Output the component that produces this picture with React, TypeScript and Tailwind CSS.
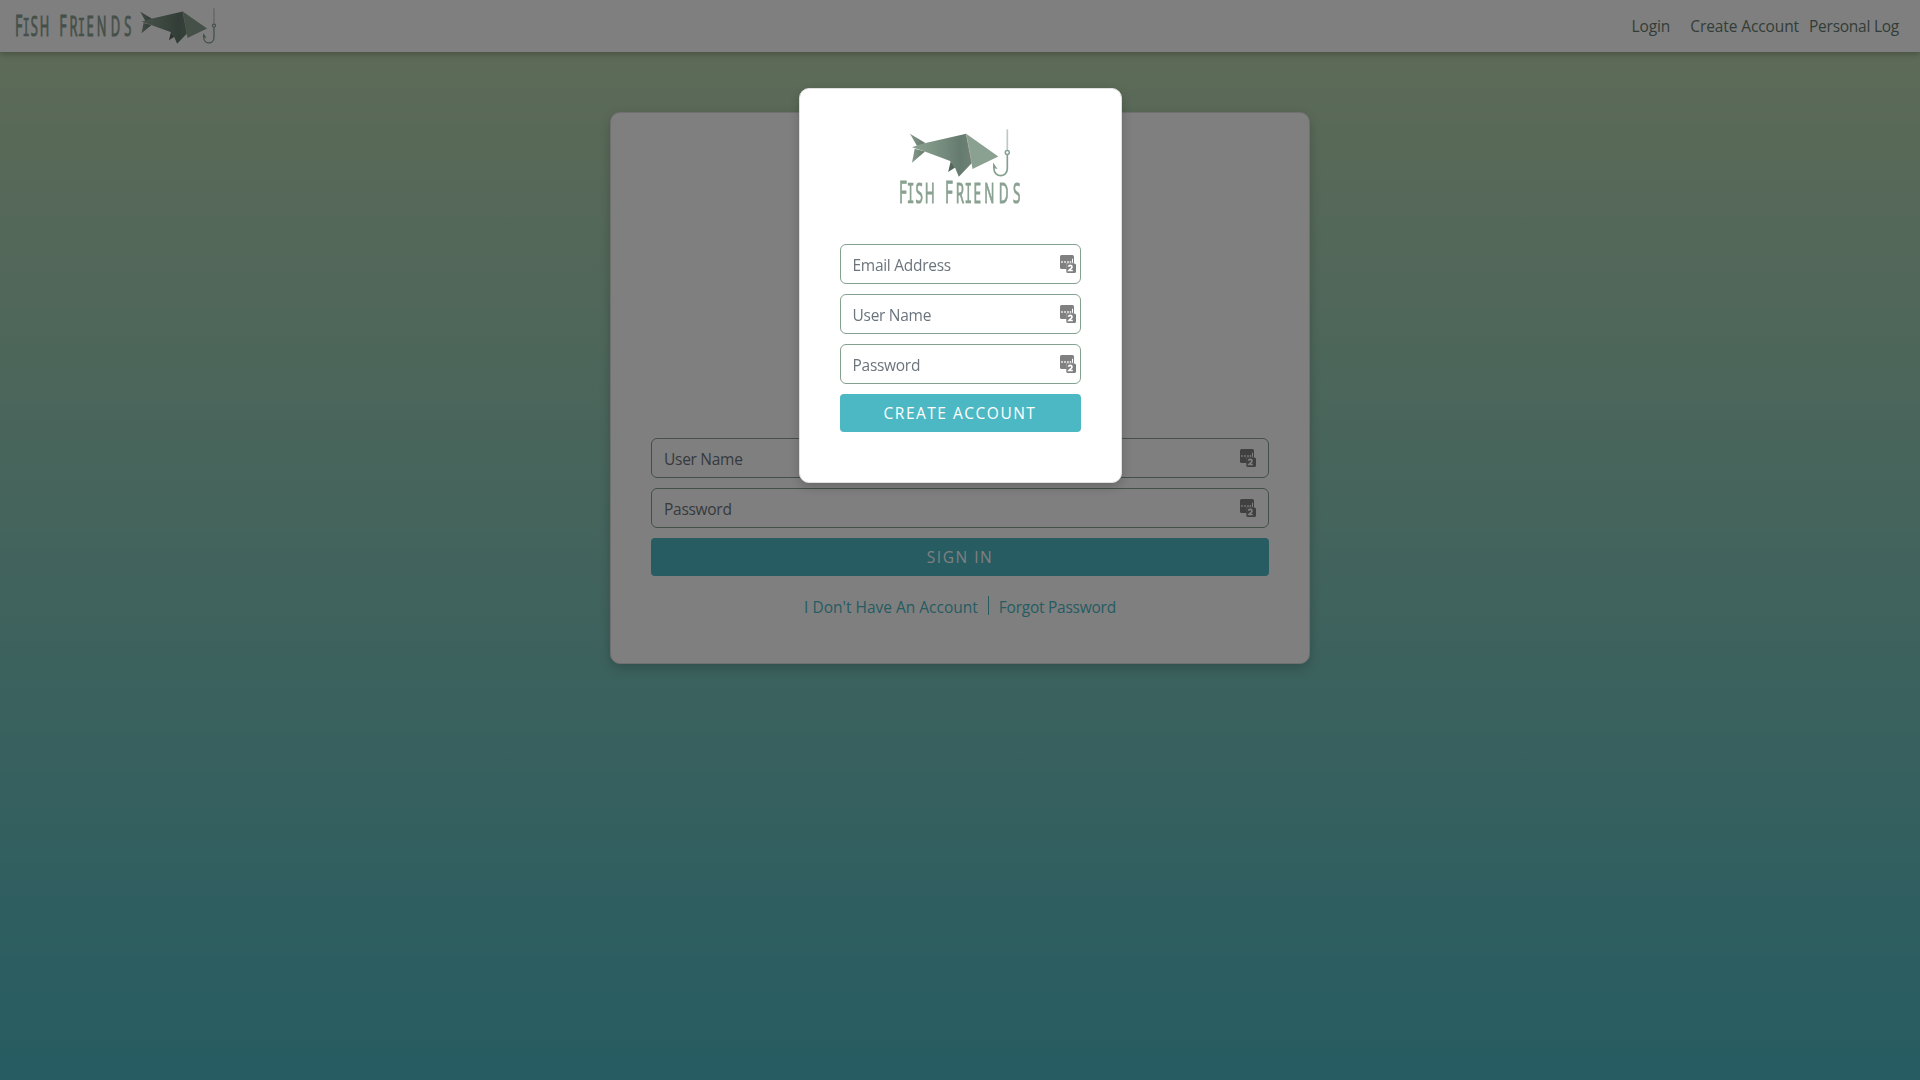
type FieldProps = { label: string; iconGap: string; type?: string };

function Fish({ className }: { className: string }) {
  return (
    <svg viewBox="360 146 299 145" className={className} preserveAspectRatio="none">
      <defs>
        <linearGradient id="fishBody" x1="0" x2="1" y1="0" y2="0">
          <stop offset="0" stopColor="#8aa191" />
          <stop offset="0.35" stopColor="#7d9485" />
          <stop offset="0.8" stopColor="#667b6f" />
          <stop offset="1" stopColor="#6d8275" />
        </linearGradient>
        <linearGradient id="fishTail" x1="0" x2="1" y1="0" y2="0">
          <stop offset="0" stopColor="#84998b" />
          <stop offset="1" stopColor="#66796d" />
        </linearGradient>
      </defs>
      <path d="M360 160L406 188L384 203Z" fill="url(#fishTail)" />
      <path d="M366 248L374 206L405 214Z" fill="url(#fishTail)" />
      <path d="M482 243L495 262L474 276Z" fill="#55675d" />
      <path d="M366 201L400 190L528 160L545 249L506 290L495 264L480 243L404 214Z" fill="url(#fishBody)" />
      <path d="M528 160L624 229L547 267Z" fill="#8aa191" />
      <path d="M528 160L545 250" stroke="#b9a99b" strokeWidth="1.5" />
      <path d="M651 147V210" stroke="#bccbc1" strokeWidth="5" />
      <circle cx="651" cy="217" r="6" fill="none" stroke="#84a08f" strokeWidth="4.5" />
      <path d="M651 224V265C651 294 611 294 611 265V254" fill="none" stroke="#84a08f" strokeWidth="5" />
      <path d="M608 247L622 267L609 264Z" fill="#84a08f" />
    </svg>
  );
}

const serifI = "'DejaVu Sans Mono', monospace";

function Wordmark({ className }: { className: string }) {
  return (
    <svg viewBox="0 0 120 25" className={`overflow-visible ${className}`} preserveAspectRatio="none">
      <g
        transform="scale(0.48 1)"
        fill="#8aa191"
        stroke="#8aa191"
        strokeWidth="1.1"
        fontFamily="'Open Sans', sans-serif"
        fontWeight="500"
        fontSize="28"
        textAnchor="middle"
      >
        <text y="23">
          <tspan x="6" fontSize="31">F</tspan>
          <tspan x="22" fontFamily={serifI} fontSize="26.5" strokeWidth="0.5">I</tspan>
          <tspan x="40">S</tspan>
          <tspan x="62">H</tspan>
        </text>
        <text y="23">
          <tspan x="102" fontSize="31">F</tspan>
          <tspan x="125">R</tspan>
          <tspan x="142.5" fontFamily={serifI} fontSize="26.5" strokeWidth="0.5">I</tspan>
          <tspan x="161">E</tspan>
          <tspan x="186">N</tspan>
          <tspan x="216">D</tspan>
          <tspan x="243">S</tspan>
        </text>
      </g>
    </svg>
  );
}

function ManagerIcon() {
  return (
    <svg viewBox="0 0 16 18" className="h-[18px] w-4 shrink-0">
      <rect width="14" height="14" rx="1.6" fill="#808080" />
      <path d="M1.2 6.2h1.6v1.6H1.2zM4.2 6.2h1.6v1.6H4.2zM7.2 6.2h1.6v1.6H7.2zM9.8 6.2h1.4v1.6H9.8zM12 3.8h1v4H12z" fill="#fff" />
      <path d="M6 8.3h8v5H6z" fill="#fff" opacity="0.45" />
      <rect x="6.3" y="8.5" width="9.7" height="9.5" rx="1.6" fill="#808080" />
      <path d="M8.5 11.8C9 9.9 12 10.1 12 11.9C12 13.2 10 14.2 9 15.5H12.8" fill="none" stroke="#fff" strokeWidth="1.7" />
    </svg>
  );
}

function Field({ label, iconGap, type = "text" }: FieldProps) {
  return (
    <div className={`flex h-10 items-center rounded-[6px] border border-[#84a08f] bg-white pl-3 ${iconGap}`}>
      <input
        type={type}
        placeholder={label}
        className="min-w-0 flex-1 bg-transparent pt-px text-[15.5px] tracking-[-0.28px] outline-none placeholder:text-[#6c757d]"
      />
      <ManagerIcon />
    </div>
  );
}

function Action({ children }: { children: string }) {
  return (
    <button className="h-[38px] w-full rounded-[4px] bg-[#4cb8c4] text-[15.5px] tracking-[1.5px] text-white">
      {children}
    </button>
  );
}

export default function App() {
  return (
    <div className="flex h-[1080px] w-full flex-col overflow-hidden bg-[linear-gradient(180deg,#c1d7ae_0px,#4cb8c4_1080px)] font-['Open_Sans',sans-serif] text-[15.5px] leading-6">
      <header className="flex h-[52px] shrink-0 items-center justify-between bg-white pl-4 pr-[21px] shadow-[0_2px_6px_rgba(0,0,0,0.25)]">
        <div className="flex items-center">
          <Wordmark className="h-6 w-[115px]" />
          <Fish className="ml-[9px] h-9 w-[76px]" />
        </div>
        <nav className="flex tracking-[-0.1px] text-[#667b6f]">
          <a className="mr-5">Login</a>
          <a className="mr-2.5">Create Account</a>
          <a className="tracking-[-0.25px]">Personal Log</a>
        </nav>
      </header>

      <main className="mx-auto mt-[60px] flex h-[552px] w-[700px] flex-col rounded-[10px] border border-[#dfdfdf] bg-white px-10 pt-[325px] shadow-[0_4px_12px_rgba(0,0,0,0.2)]">
        <div className="flex flex-col gap-2.5">
          <Field label="User Name" iconGap="pr-3" />
          <Field label="Password" type="password" iconGap="pr-3" />
          <Action>SIGN IN</Action>
        </div>
        <div className="mt-[19px] flex items-start justify-center text-[#4cb8c4]">
          <a className="pr-2.5">I Don't Have An Account</a>
          <span className="mt-px h-[19px] w-px bg-[#4cb8c4]" />
          <a className="pl-2.5 tracking-[-0.25px]">Forgot Password</a>
        </div>
      </main>

      <div className="fixed inset-0 flex items-start justify-center bg-black/50 pt-[88px]">
        <section className="flex h-[395px] w-[323px] flex-col rounded-[10px] border border-[#dfdfdf] bg-white px-10 pt-10 shadow-[0_4px_12px_rgba(0,0,0,0.2)]">
          <div className="flex h-[115px] flex-col items-center">
            <Fish className="h-12 w-[100px]" />
            <Wordmark className="mt-[3px] h-[25px] w-[120px]" />
          </div>
          <div className="flex flex-col gap-2.5">
            <Field label="Email Address" iconGap="pr-1" />
            <Field label="User Name" iconGap="pr-1" />
            <Field label="Password" type="password" iconGap="pr-1" />
            <Action>CREATE ACCOUNT</Action>
          </div>
        </section>
      </div>
    </div>
  );
}
